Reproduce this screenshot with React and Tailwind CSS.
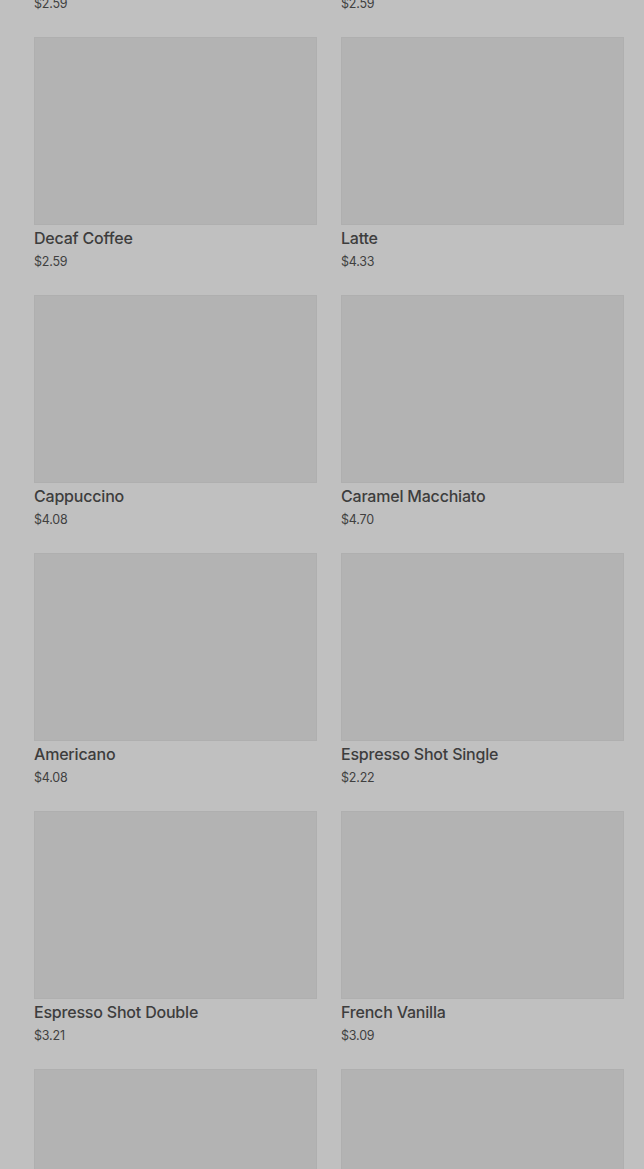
import React from "react";

const items = [
  { name: "Regular Coffee", price: "$2.59" },
  { name: "Iced Coffee", price: "$2.59" },
  { name: "Decaf Coffee", price: "$2.59" },
  { name: "Latte", price: "$4.33" },
  { name: "Cappuccino", price: "$4.08" },
  { name: "Caramel Macchiato", price: "$4.70" },
  { name: "Americano", price: "$4.08" },
  { name: "Espresso Shot Single", price: "$2.22" },
  { name: "Espresso Shot Double", price: "$3.21" },
  { name: "French Vanilla", price: "$3.09" },
  { name: "Hot Chocolate", price: "$2.99" },
  { name: "Chai Latte", price: "$3.89" },
];

export default function App() {
  return (
    <div
      className="w-[644px] h-[1169px] overflow-hidden bg-[#c0c0c0]"
      style={{ fontFamily: "Inter, 'Noto Sans', sans-serif" }}
    >
      <div className="grid grid-cols-2 gap-x-6 gap-y-[24px] pl-[34px] pr-[20px] -mt-[221px]">
        {items.map((it) => (
          <div key={it.name} className="flex flex-col">
            <div className="h-[188px] bg-[#b3b3b3] border border-[#afafaf]" />
            <div className="mt-[3px] text-[16px] leading-[20px] font-medium tracking-[-0.2px] text-[#3d3d3d]">
              {it.name}
            </div>
            <div className="mt-[5px] text-[12.5px] leading-[18px] tracking-[-0.2px] text-[#404040]">
              {it.price}
            </div>
          </div>
        ))}
      </div>
    </div>
  );
}
